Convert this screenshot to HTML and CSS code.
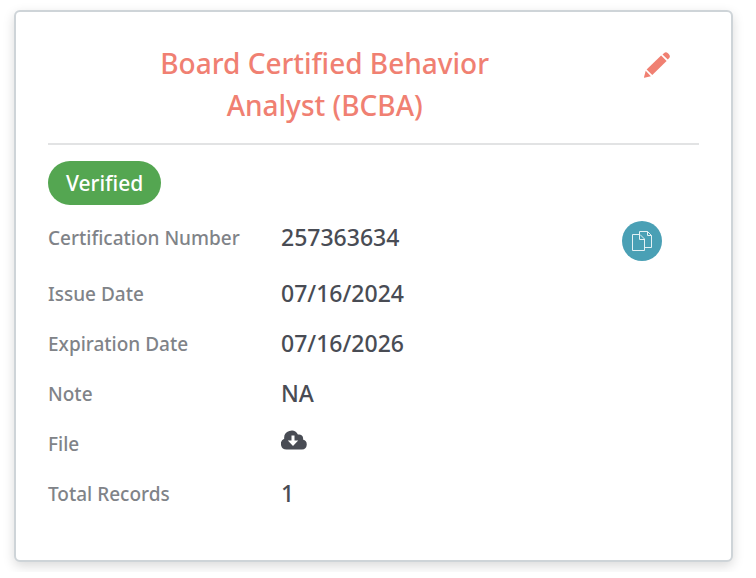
FILE: index.html
```html
<!DOCTYPE html>
<html lang="en">
<head>
    <meta charset="UTF-8">
    <meta name="viewport" content="width=device-width, initial-scale=1.0">
    <title>Certification</title>
    <link rel="stylesheet" href="styles.css">
</head>
<body>

    <section class="card">
        <div class="card-header">
            <h2>Board Certified Behavior Analyst (BCBA)</h2>
            <button type="button" class="edit-btn" aria-label="Edit certification">
                <svg width="26" height="26" viewBox="0 0 26 26" fill="currentColor">
                    <path d="M2.6 17.4 17.1 3.5 22.6 9 8.3 23z"/>
                    <path d="M18.5 2.4 20.2 .9Q22.1-.6 24.2 1.6L24.7 2.1Q26.8 4.2 25.2 6L23.8 7.6z"/>
                    <path d="M1.7 18.8 6.9 24.2 .4 25.8Q-.1 25.9 0 25.3z"/>
                </svg>
            </button>
        </div>

        <span class="badge">Verified</span>

        <dl class="details">
            <div class="row">
                <dt>Certification Number</dt>
                <dd>257363634</dd>
                <dd class="action">
                    <button type="button" class="copy-btn" aria-label="Copy certification number">
                        <svg width="20" height="20" viewBox="0 0 20 20" fill="none" stroke="currentColor" stroke-width="1">
                            <path d="M.5 3.5H8L12.5 8V19.5H.5z"/>
                            <path d="M7.5 3.5V8.5H12.5"/>
                            <path d="M7.5 3.5V.5H15.5L19.5 4.5V16.5H12.5"/>
                            <path d="M15.5 .5V4.5H19.5"/>
                        </svg>
                    </button>
                </dd>
            </div>
            <div class="row">
                <dt>Issue Date</dt>
                <dd>07/16/2024</dd>
            </div>
            <div class="row">
                <dt>Expiration Date</dt>
                <dd>07/16/2026</dd>
            </div>
            <div class="row">
                <dt>Note</dt>
                <dd>NA</dd>
            </div>
            <div class="row">
                <dt>File</dt>
                <dd>
                    <a href="#" class="download" aria-label="Download file">
                        <svg width="26" height="20" viewBox="0 0 26 20">
                            <path fill="currentColor" d="M5.6 19.5A5.6 5.6 0 0 1 3.2 8.8 7.3 7.3 0 0 1 16.9 4.6 4.1 4.1 0 0 1 22 9.5 5.1 5.1 0 0 1 21 19.5z"/>
                            <path fill="#fff" d="M10.5 5.5H13.5V10.5H17.2L12 16 6.8 10.5H10.5z"/>
                        </svg>
                    </a>
                </dd>
            </div>
            <div class="row">
                <dt>Total Records</dt>
                <dd>1</dd>
            </div>
        </dl>
    </section>

</body>
</html>
```
FILE: styles.css
```css
body {
    font-family: "Noto Sans", "Open Sans", sans-serif;
    background-color: #fff;
    color: #494c54;
    margin: 0;
    padding: 10px 23px 10px 14px;
}
h2, dl, dd {
    margin: 0;
}
button {
    border: none;
    padding: 0;
    background: none;
    cursor: pointer;
}
svg {
    display: block;
}
.card {
    border: 2px solid #ced4d8;
    border-radius: 6px;
    padding: 30px 32px 49px;
    background-color: #fff;
    box-shadow: 0 4px 12px rgba(0, 0, 0, 0.15);
}
.card-header {
    display: grid;
    grid-template-columns: 85% 1fr;
    align-items: start;
    padding-bottom: 17px;
    margin-bottom: 16px;
    border-bottom: 2px solid #e2e3e4;
}
h2 {
    padding: 0 80px;
    font-size: 28px;
    font-weight: 500;
    line-height: 42px;
    text-align: center;
    color: #f08072;
}
.edit-btn {
    justify-self: end;
    margin: 10px 29px 0 0;
    color: #f08072;
}
.badge {
    display: block;
    width: fit-content;
    padding: 0 18px;
    border-radius: 22px;
    font-size: 21px;
    font-weight: 500;
    line-height: 44px;
    color: #fff;
    background-color: #54a651;
}
.details {
    display: flex;
    flex-direction: column;
    gap: 16px;
    margin-top: 16px;
}
.row {
    display: grid;
    grid-template-columns: 233px 1fr auto;
}
dt {
    font-size: 19px;
    font-weight: 500;
    line-height: 34px;
    color: #808388;
}
dd {
    font-size: 23px;
    font-weight: 500;
    line-height: 32px;
}
.action {
    padding-right: 37px;
}
.copy-btn {
    display: flex;
    align-items: center;
    justify-content: center;
    width: 40px;
    height: 40px;
    border-radius: 50%;
    color: #e4f1f4;
    background-color: #4aa0b5;
}
.download {
    display: inline-flex;
    vertical-align: top;
    padding-top: 3px;
    color: inherit;
}
```
